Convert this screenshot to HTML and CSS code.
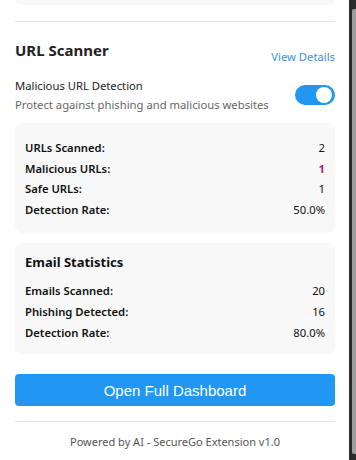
FILE: index.html
```html
<!DOCTYPE html>
<html lang="en">
<head>
    <meta charset="UTF-8">
    <meta name="viewport" content="width=device-width, initial-scale=1.0">
    <title>SecureGo Extension</title>
    <link rel="stylesheet" href="styles.css">
</head>
<body>
    <div class="popup">
        <div class="content">
            <!-- Phần trước đã cuộn qua -->
            <div class="prev-card"></div>
            <div class="divider"></div>

            <!-- URL Scanner -->
            <div class="section-header">
                <h3>URL Scanner</h3>
                <a href="#" class="view-link">View Details</a>
            </div>

            <div class="setting-row">
                <div class="setting-text">
                    <div class="setting-title">Malicious URL Detection</div>
                    <div class="setting-desc">Protect against phishing and malicious websites</div>
                </div>
                <label class="switch">
                    <input type="checkbox" checked>
                    <span class="slider"></span>
                </label>
            </div>

            <div class="stats-card">
                <div class="stat-row"><span class="stat-label">URLs Scanned:</span><span class="stat-value">2</span></div>
                <div class="stat-row"><span class="stat-label">Malicious URLs:</span><span class="stat-value danger">1</span></div>
                <div class="stat-row"><span class="stat-label">Safe URLs:</span><span class="stat-value">1</span></div>
                <div class="stat-row"><span class="stat-label">Detection Rate:</span><span class="stat-value">50.0%</span></div>
            </div>

            <!-- Email Statistics -->
            <div class="stats-card email-card">
                <h4>Email Statistics</h4>
                <div class="stat-row"><span class="stat-label">Emails Scanned:</span><span class="stat-value">20</span></div>
                <div class="stat-row"><span class="stat-label">Phishing Detected:</span><span class="stat-value">16</span></div>
                <div class="stat-row"><span class="stat-label">Detection Rate:</span><span class="stat-value">80.0%</span></div>
            </div>

            <button class="dashboard-btn">Open Full Dashboard</button>

            <div class="footer">Powered by AI - SecureGo Extension v1.0</div>
        </div>

        <!-- Thanh cuộn -->
        <div class="scrollbar">
            <div class="scroll-thumb"></div>
        </div>
    </div>
</body>
</html>
```

FILE: styles.css
```css
/* Căn chỉnh chung */
body {
    margin: 0;
    background-color: #fff;
    font-family: "Noto Sans", "Open Sans", sans-serif;
    color: #222;
    height: 460px;
    overflow: hidden;
}

.popup {
    display: flex;
    height: 460px;
}

.content {
    flex: 1;
    padding: 0 14px 0 15px;
}

.prev-card {
    height: 5px;
    background-color: #f8f8f8;
    border-radius: 0 0 8px 8px;
}

.divider {
    height: 1px;
    background-color: #e6e6e6;
    margin-top: 16px;
}

/* Phần tiêu đề */
.section-header {
    display: flex;
    justify-content: space-between;
    align-items: flex-end;
    margin-top: 17px;
}

.section-header h3 {
    margin: 0;
    font-size: 15px;
    font-weight: 700;
    color: #222;
    line-height: 22px;
}

.view-link {
    color: #3d8fe0;
    font-size: 11.25px;
    text-decoration: none;
    line-height: 16px;
    margin-bottom: -4px;
}

/* Công tắc */
.setting-row {
    display: flex;
    justify-content: space-between;
    align-items: center;
    margin-top: 15px;
}

.setting-title {
    font-size: 11.25px;
    color: #222;
    line-height: 19px;
}

.setting-desc {
    font-size: 11.25px;
    color: #666;
    line-height: 19px;
}

.switch {
    position: relative;
    width: 40px;
    height: 20px;
    flex-shrink: 0;
}

.switch input {
    display: none;
}

.slider {
    display: block;
    width: 40px;
    height: 20px;
    border-radius: 10px;
    background-color: #2196f3;
}

.slider::after {
    content: "";
    position: absolute;
    top: 2px;
    right: 3px;
    width: 16px;
    height: 16px;
    border-radius: 50%;
    background-color: #fff;
}

/* Thẻ thống kê */
.stats-card {
    background-color: #f8f8f8;
    border-radius: 8px;
    padding: 15px 10px 13px;
    margin-top: 9px;
}

.stat-row {
    display: flex;
    justify-content: space-between;
    font-size: 11.25px;
    line-height: 20.5px;
    color: #111;
}

.stat-label {
    font-weight: 600;
}

.stat-value.danger {
    color: #c2185b;
    font-weight: 700;
}

.email-card {
    margin-top: 10px;
    padding: 9px 10px 11px;
}

.email-card h4 {
    margin: 0 0 8px;
    font-size: 13px;
    font-weight: 700;
    line-height: 20px;
    color: #111;
}

.email-card .stat-row {
    line-height: 21px;
}

/* Nút mở bảng điều khiển */
.dashboard-btn {
    display: block;
    width: 100%;
    height: 32px;
    margin-top: 20px;
    background-color: #2196f3;
    color: #fff;
    border: none;
    border-radius: 4px;
    font-family: "Liberation Sans", Arial, sans-serif;
    font-size: 15px;
    cursor: pointer;
}

.footer {
    margin-top: 15px;
    border-top: 1px solid #e6e6e6;
    padding-top: 11px;
    text-align: center;
    font-size: 11px;
    color: #555;
    line-height: 18px;
}

/* Thanh cuộn giả */
.scrollbar {
    width: 7px;
    background-color: #2b2b2b;
    padding: 9px 0 6px 3px;
    box-sizing: border-box;
}

.scroll-thumb {
    height: 100%;
    background-color: #9e9e9e;
    border-radius: 2px 0 0 2px;
}
```
